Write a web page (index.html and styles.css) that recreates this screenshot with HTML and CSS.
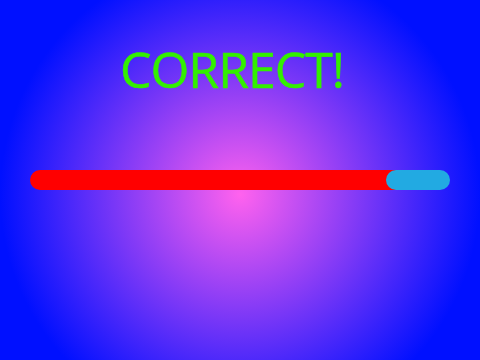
FILE: index.html
```html
<!DOCTYPE html>
<html lang="en">

<head>
    <meta charset="UTF-8">
    <meta name="viewport" content="width=device-width, initial-scale=1.0">
    <title>Quiz</title>
    <link rel="stylesheet" href="styles.css">
</head>

<body>
    <h1 class="result">CORRECT!</h1>
    <!-- Timer bar -->
    <div class="timer">
        <div class="timer-used"></div>
        <div class="timer-left"></div>
    </div>
</body>

</html>
```

FILE: styles.css
```css
body {
    margin: 0;
    height: 100vh;
    display: flex;
    flex-direction: column;
    background: radial-gradient(circle farthest-side at 50% 54%, #ff62ee, #0010ff);
    font-family: "Open Sans", sans-serif;
}

.result {
    margin: 35px 0 0;
    padding-right: 16px;
    text-align: center;
    font-size: 50px;
    font-weight: normal;
    letter-spacing: -1px;
    line-height: 68px;
    color: #33f000;
    -webkit-text-stroke: 0.5px #33f000;
}

.timer {
    display: flex;
    height: 20px;
    margin: 67px 30px 0;
}

.timer-used {
    flex: 1;
    margin-right: -10px;
    background-color: #ff0000;
    border-radius: 10px 0 0 10px;
}

.timer-left {
    width: 64px;
    background-color: #22aae2;
    border-radius: 10px;
}
```
